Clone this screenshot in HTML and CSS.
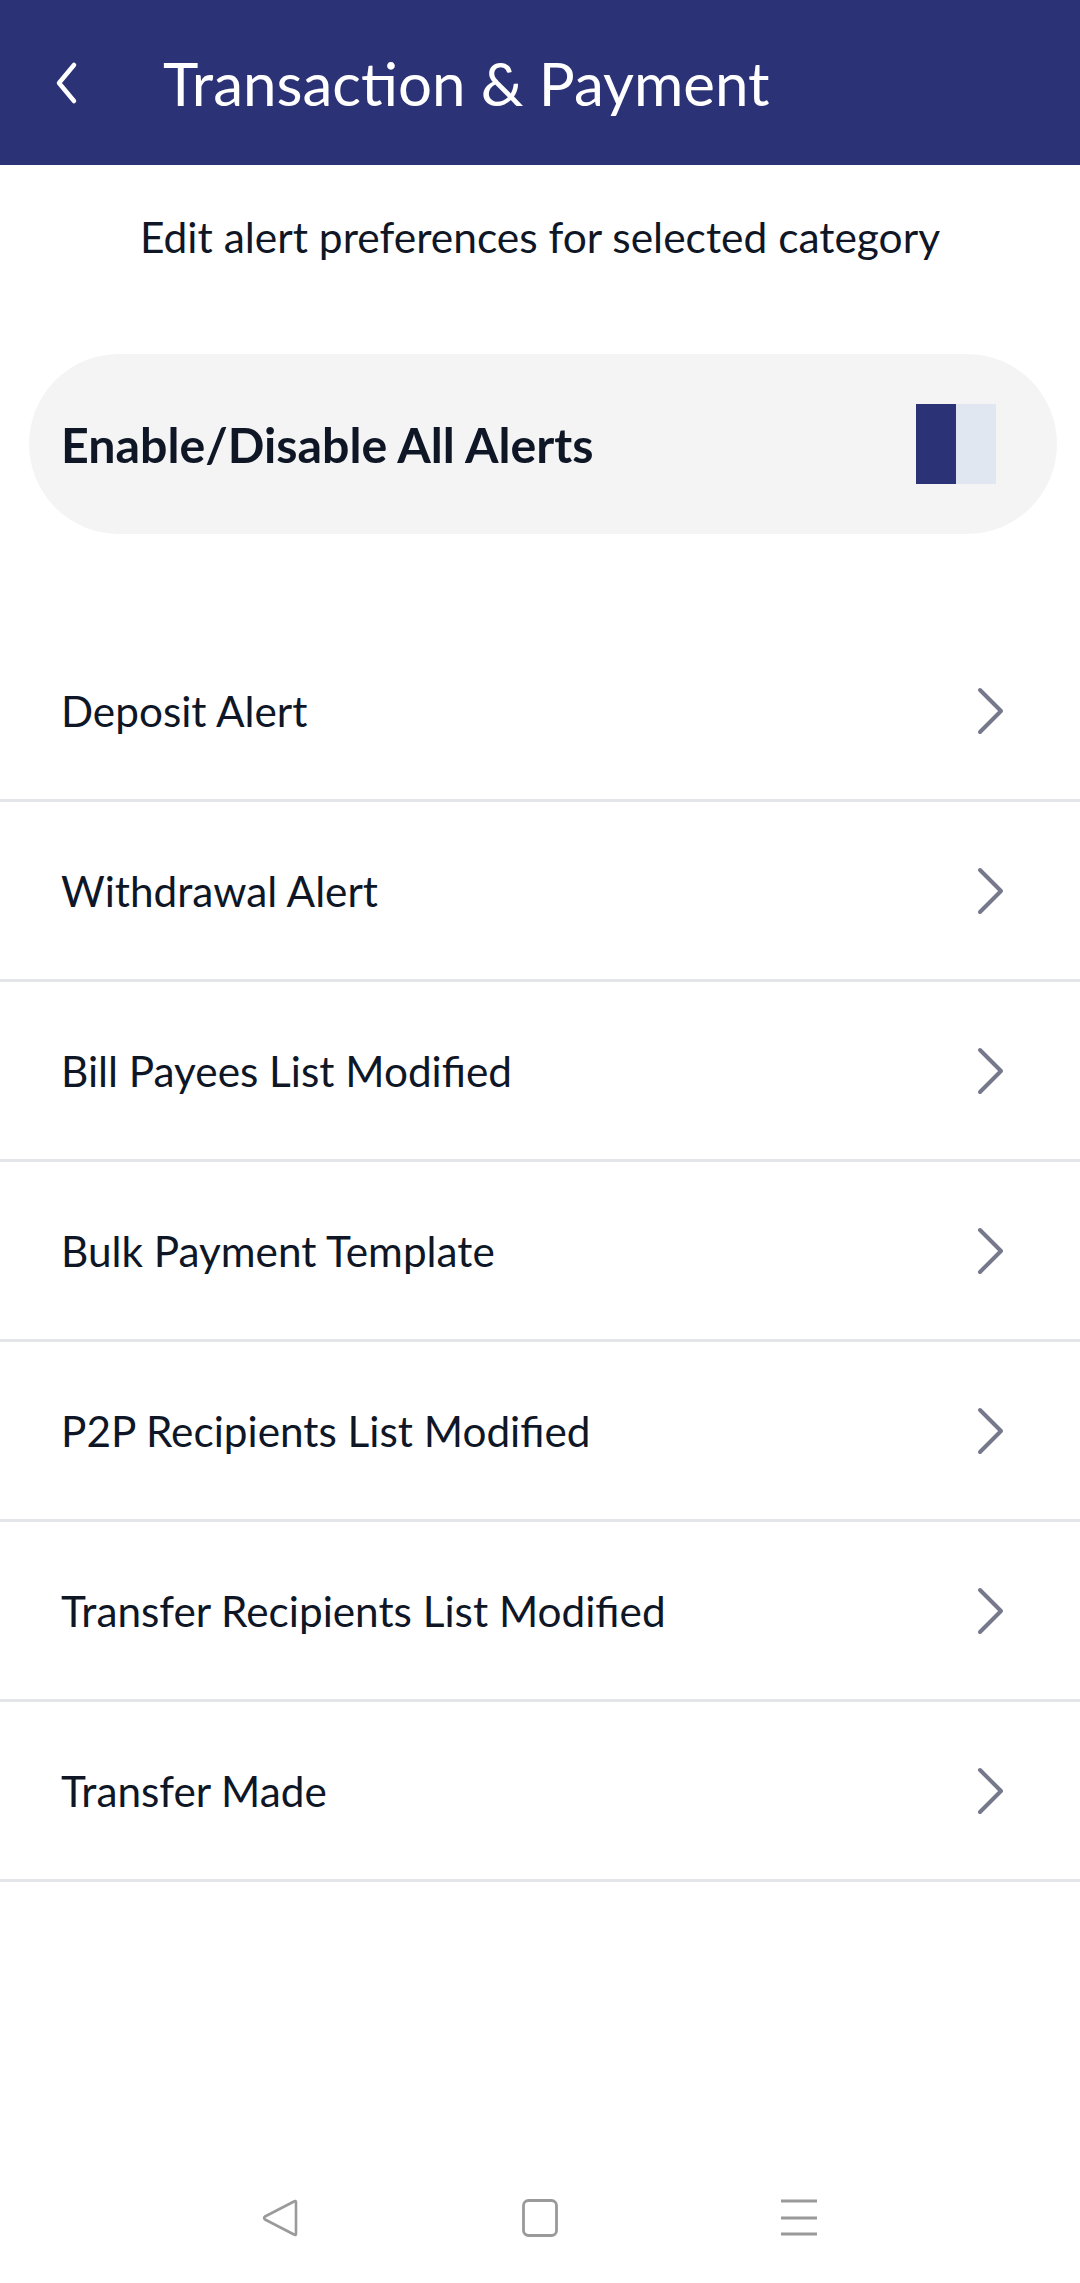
FILE: index.html
```html
<!DOCTYPE html>
<html>
<head>
<meta charset="utf-8">
<link rel="stylesheet" href="styles.css">
</head>
<body>
<div class="screen">
  <header class="appbar">
    <svg class="back" width="30" height="44" viewBox="0 0 30 44"><path d="M22 4 L7 22 L22 40" fill="none" stroke="#fff" stroke-width="4.5" stroke-linecap="round" stroke-linejoin="round"/></svg>
    <h1 class="title">Transaction &amp; Payment</h1>
  </header>
  <p class="subtitle">Edit alert preferences for selected category</p>
  <div class="card">
    <span class="card-label">Enable/Disable All Alerts</span>
    <div class="toggle"><span class="toggle-on"></span><span class="toggle-off"></span></div>
  </div>
  <ul class="list">
    <li class="row"><span>Deposit Alert</span><svg class="chev" width="34" height="52" viewBox="0 0 34 52"><path d="M6 5 L27 26 L6 47" fill="none" stroke="#76788b" stroke-width="4" stroke-linecap="round" stroke-linejoin="round"/></svg></li>
    <li class="row"><span>Withdrawal Alert</span><svg class="chev" width="34" height="52" viewBox="0 0 34 52"><path d="M6 5 L27 26 L6 47" fill="none" stroke="#76788b" stroke-width="4" stroke-linecap="round" stroke-linejoin="round"/></svg></li>
    <li class="row"><span>Bill Payees List Modified</span><svg class="chev" width="34" height="52" viewBox="0 0 34 52"><path d="M6 5 L27 26 L6 47" fill="none" stroke="#76788b" stroke-width="4" stroke-linecap="round" stroke-linejoin="round"/></svg></li>
    <li class="row"><span>Bulk Payment Template</span><svg class="chev" width="34" height="52" viewBox="0 0 34 52"><path d="M6 5 L27 26 L6 47" fill="none" stroke="#76788b" stroke-width="4" stroke-linecap="round" stroke-linejoin="round"/></svg></li>
    <li class="row"><span>P2P Recipients List Modified</span><svg class="chev" width="34" height="52" viewBox="0 0 34 52"><path d="M6 5 L27 26 L6 47" fill="none" stroke="#76788b" stroke-width="4" stroke-linecap="round" stroke-linejoin="round"/></svg></li>
    <li class="row"><span>Transfer Recipients List Modified</span><svg class="chev" width="34" height="52" viewBox="0 0 34 52"><path d="M6 5 L27 26 L6 47" fill="none" stroke="#76788b" stroke-width="4" stroke-linecap="round" stroke-linejoin="round"/></svg></li>
    <li class="row"><span>Transfer Made</span><svg class="chev" width="34" height="52" viewBox="0 0 34 52"><path d="M6 5 L27 26 L6 47" fill="none" stroke="#76788b" stroke-width="4" stroke-linecap="round" stroke-linejoin="round"/></svg></li>
  </ul>
  <nav class="navbar">
    <svg width="38" height="38" viewBox="0 0 38 38"><path d="M34 3.5 L34 34.5 Q34 37 32 35.5 L3 20.5 Q1.2 19 3 17.5 L32 2.5 Q34 1 34 3.5 Z" fill="none" stroke="#9a9a9a" stroke-width="2.6" stroke-linejoin="round"/></svg>
    <svg width="38" height="38" viewBox="0 0 38 38"><rect x="2.5" y="1.5" width="33" height="35" rx="5" fill="none" stroke="#9a9a9a" stroke-width="2.8"/></svg>
    <svg width="38" height="38" viewBox="0 0 38 38"><path d="M1 2 H37 M1 19 H37 M1 35 H37" stroke="#9a9a9a" stroke-width="3.2"/></svg>
  </nav>
</div>
</body>
</html>
```
FILE: styles.css
```css
* { box-sizing: border-box; }
html, body { margin: 0; padding: 0; background: #fff; }
body { font-family: Lato, "Noto Sans", sans-serif; color: #0f1726; }
.screen { width: 1080px; height: 2283px; display: flex; flex-direction: column; position: relative; }
.appbar { height: 165px; background: #2b3276; display: flex; align-items: center; padding-left: 52px; flex-shrink: 0; }
.back { display: block; margin-top: 1px; }
.title { margin: 0 0 0 81px; color: #fff; font-weight: 400; font-size: 60px; line-height: 1; letter-spacing: 0; }
.subtitle { margin: 48px 0 0; text-align: center; font-size: 42.5px; line-height: 48px; }
.card { margin: 93px 23px 0 29px; height: 180px; border-radius: 90px; background: #f4f4f4; display: flex; align-items: center; justify-content: space-between; padding: 0 61px 0 32px; }
.card-label { font-weight: 700; font-size: 48.3px; }
.toggle { display: flex; width: 80px; height: 80px; }
.toggle-on { width: 40px; background: #2b3276; }
.toggle-off { width: 40px; background: #e1e7f0; }
.list { list-style: none; margin: 88px 0 0; padding: 0; }
.row { height: 180px; border-bottom: 3px solid #e3e5e9; display: flex; align-items: center; justify-content: space-between; padding: 0 72px 0 61px; font-size: 42.3px; }
.chev { display: block; }
.navbar { margin-top: auto; height: 84px; display: flex; justify-content: center; align-items: flex-start; gap: 221px; }
.navbar svg { display: block; }
```
